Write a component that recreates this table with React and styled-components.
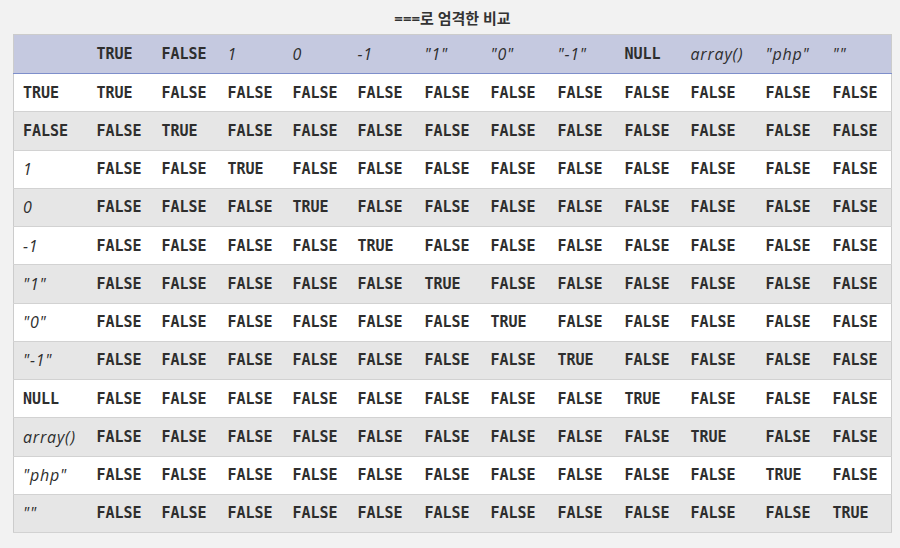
import React from "react";
import styled, { createGlobalStyle } from "styled-components";

const GlobalStyle = createGlobalStyle`
  body {
    margin: 0;
    background: #f2f2f2;
    color: #333;
    font-family: "Open Sans", "Noto Sans CJK KR", sans-serif;
  }
`;

const Page = styled.div`
  padding: 8px 9px 0 13px;
`;

const Table = styled.table`
  border-collapse: collapse;
  border: 1px solid #cccccc;
  width: 878px;
  table-layout: fixed;
`;

const Col = styled.col`
  width: ${(p) => p.$w}px;
`;

const Caption = styled.caption`
  font-family: "Noto Sans", "Noto Sans CJK KR", sans-serif;
  font-weight: 700;
  font-size: 15px;
  line-height: 20px;
  color: #333;
  padding-bottom: 6px;
`;

const HeadRow = styled.tr`
  background: #c5c9e0;
  border-bottom: 1px solid #7e8fcb;
`;

const Row = styled.tr`
  background: ${(p) => (p.$shade ? "#e6e6e6" : "#ffffff")};
  border-bottom: 1px solid #d2d2d2;
`;

const Cell = styled.td`
  height: ${(p) => (p.$head ? "39px" : "38.25px")};
  padding: 0 0 0 9px;
  text-align: left;
  white-space: nowrap;
  box-sizing: border-box;
  font-family: ${(p) =>
    p.$code ? '"DejaVu Sans Mono", monospace' : '"Open Sans", sans-serif'};
  font-weight: ${(p) => (p.$code ? 700 : 400)};
  font-style: ${(p) => (p.$code ? "normal" : "italic")};
  font-size: ${(p) => (p.$code ? "15px" : "16px")};
  letter-spacing: ${(p) => (p.$code ? "0" : "0.8px")};
  color: #2e2e2e;
`;

const values = ["TRUE", "FALSE", "1", "0", "-1", '"1"', '"0"', '"-1"', "NULL", "array()", '"php"', '""'];
const widths = [74, 65, 66, 65, 65, 67, 66, 67, 67, 66, 75, 67, 68];
const isCode = (v) => v === "TRUE" || v === "FALSE" || v === "NULL";

const App = () => (
  <Page>
    <GlobalStyle />
    <Table>
      <Caption>===로 엄격한 비교</Caption>
      <colgroup>
        {widths.map((w, i) => (
          <Col key={i} $w={w} />
        ))}
      </colgroup>
      <thead>
        <HeadRow>
          <Cell as="th" $head $code />
          {values.map((v) => (
            <Cell as="th" key={v} $head $code={isCode(v)}>
              {v}
            </Cell>
          ))}
        </HeadRow>
      </thead>
      <tbody>
        {values.map((rv, i) => (
          <Row key={rv} $shade={i % 2 === 1}>
            <Cell $code={isCode(rv)}>{rv}</Cell>
            {values.map((cv, j) => (
              <Cell key={cv} $code>
                {i === j ? "TRUE" : "FALSE"}
              </Cell>
            ))}
          </Row>
        ))}
      </tbody>
    </Table>
  </Page>
);

export default App;
